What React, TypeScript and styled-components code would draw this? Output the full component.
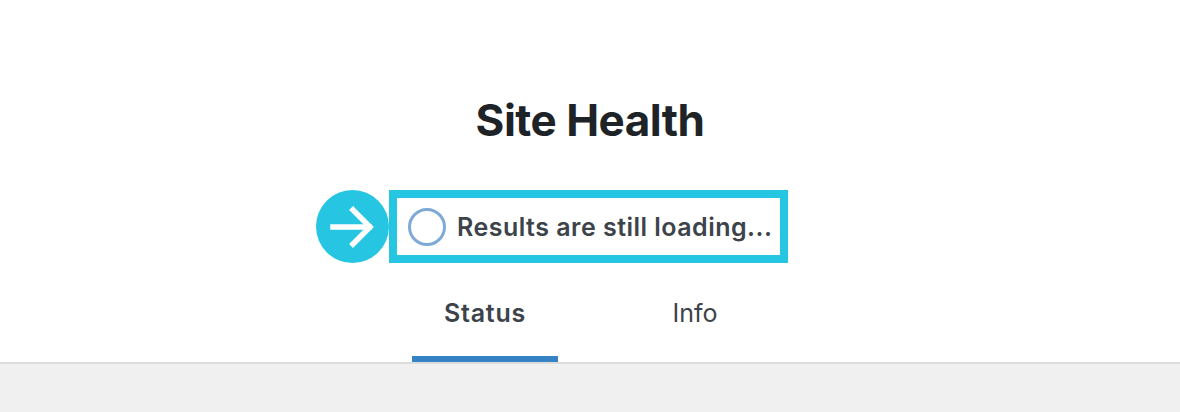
import React from "react";
import styled, { createGlobalStyle } from "styled-components";

const Global = createGlobalStyle`
  html, body { margin: 0; padding: 0; background: #f0f0f1; }
  body { font-family: Inter, "Liberation Sans", sans-serif; }
`;

const Page = styled.div`
  width: 1180px;
  height: 412px;
  background: #f0f0f1;
  overflow: hidden;
`;

const Header = styled.header`
  height: 362px;
  background: #fff;
  border-bottom: 2px solid #dcdcde;
  display: flex;
  flex-direction: column;
  align-items: center;
`;

const Title = styled.h1`
  margin: 92px 0 0;
  height: 56px;
  font-size: 44px;
  line-height: 56px;
  font-weight: 700;
  color: #1d2327;
  letter-spacing: -0.5px;
`;

const Callout = styled.div`
  position: relative;
  box-sizing: border-box;
  margin: 42px 0 0 -3px;
  width: 399px;
  height: 73px;
  border: 8px solid #26c6e2;
  display: flex;
  align-items: center;
  gap: 11px;
  padding-left: 11px;
`;

const Badge = styled.span`
  position: absolute;
  left: -81px;
  top: -8px;
  width: 73px;
  height: 73px;
  border-radius: 50%;
  background: #26c6e2;
  display: flex;
  align-items: center;
  justify-content: center;
`;

const Spinner = styled.span`
  box-sizing: border-box;
  flex: none;
  width: 38px;
  height: 38px;
  border-radius: 50%;
  border: 3px solid #7fa9d6;
`;

const Status = styled.span`
  font-size: 25px;
  line-height: 30px;
  font-weight: 600;
  letter-spacing: 0.48px;
  color: #3c434a;
  white-space: nowrap;
`;

const Tabs = styled.nav`
  margin-top: 22px;
  display: grid;
  grid-template-columns: 146px 146px;
  column-gap: 64px;
  height: 77px;
`;

const Tab = styled.a<{ $active?: boolean }>`
  display: flex;
  justify-content: center;
  padding-top: 13px;
  box-sizing: border-box;
  font-size: 25px;
  line-height: 30px;
  font-weight: ${(p) => (p.$active ? 600 : 400)};
  letter-spacing: ${(p) => (p.$active ? "0.75px" : "0")};
  color: #3c434a;
  border-bottom: 6px solid ${(p) => (p.$active ? "#3582c4" : "transparent")};
`;

export default function App() {
  return (
    <Page>
      <Global />
      <Header>
        <Title>Site Health</Title>
        <Callout>
          <Badge>
            <svg width="46" height="46" viewBox="0 0 46 46" fill="none" stroke="#fff" strokeWidth="5.5" strokeLinecap="square" strokeLinejoin="miter">
              <path d="M3 23H39" />
              <path d="M23 6L40 23L23 40" />
            </svg>
          </Badge>
          <Spinner />
          <Status>Results are still loading...</Status>
        </Callout>
        <Tabs>
          <Tab $active>Status</Tab>
          <Tab>Info</Tab>
        </Tabs>
      </Header>
    </Page>
  );
}
